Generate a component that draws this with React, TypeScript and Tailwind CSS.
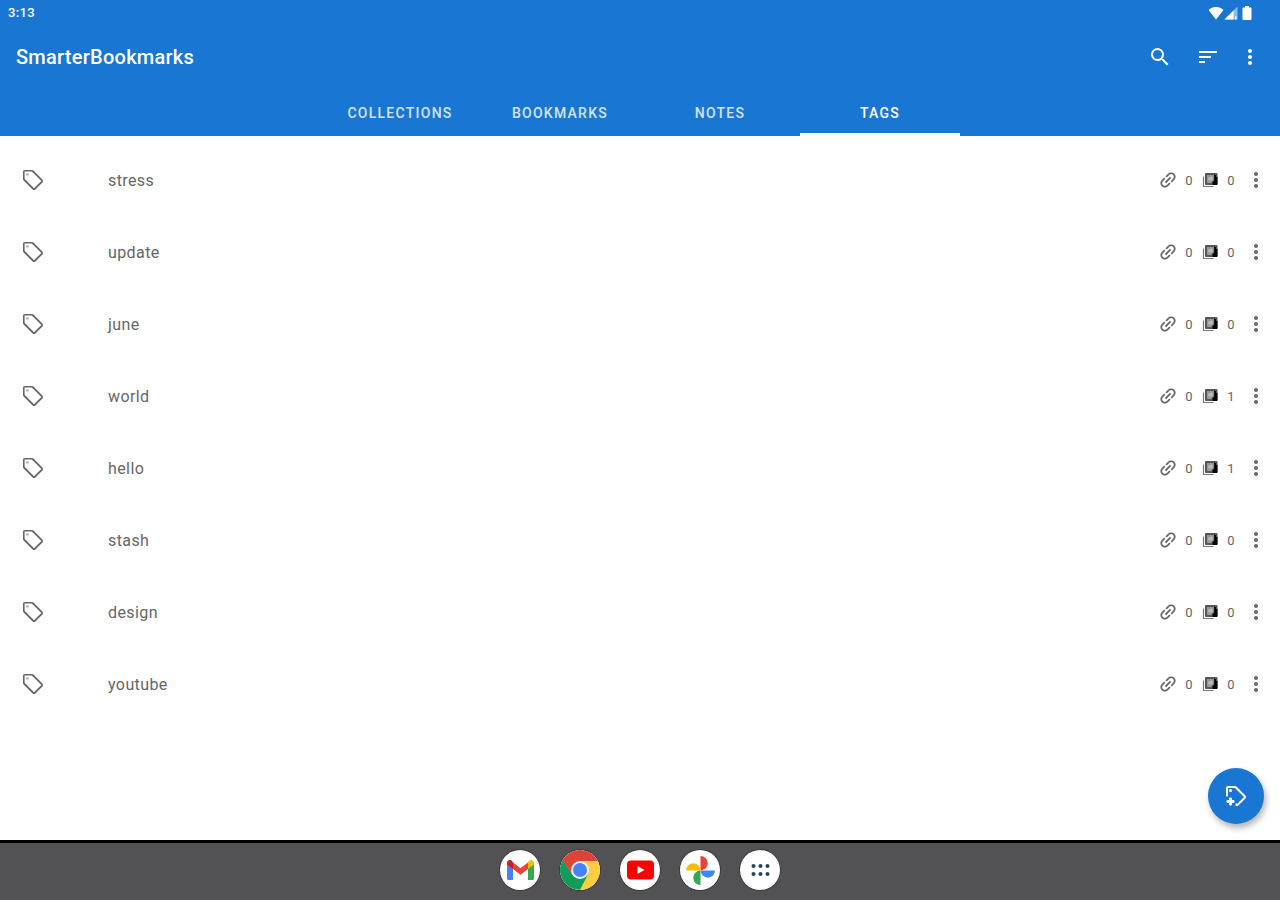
import * as React from 'react';
import { MdMoreVert, MdSearch, MdSort } from 'react-icons/md';
import { cva, type VariantProps } from 'class-variance-authority';

interface Tag {
  name: string;
  bookmarks: number;
  notes: number;
}

const tags: Tag[] = [
  { name: 'stress', bookmarks: 0, notes: 0 },
  { name: 'update', bookmarks: 0, notes: 0 },
  { name: 'june', bookmarks: 0, notes: 0 },
  { name: 'world', bookmarks: 0, notes: 1 },
  { name: 'hello', bookmarks: 0, notes: 1 },
  { name: 'stash', bookmarks: 0, notes: 0 },
  { name: 'design', bookmarks: 0, notes: 0 },
  { name: 'youtube', bookmarks: 0, notes: 0 },
];

const tabs = ['Collections', 'Bookmarks', 'Notes', 'Tags'];

/* ---------- Icons ---------- */

type IconProps = React.SVGProps<SVGSVGElement>;

const TagIcon = (props: IconProps) => (
  <svg viewBox="0 0 24 24" fill="currentColor" aria-hidden="true" {...props}>
    <path d="M21.41 11.58l-9-9A2 2 0 0 0 11 2H4a2 2 0 0 0-2 2v7a2 2 0 0 0 .59 1.42l9 9A2 2 0 0 0 13 22a2 2 0 0 0 1.41-.59l7-7A2 2 0 0 0 22 13a2 2 0 0 0-.59-1.42M13 20.2L3.6 10.8V3.6h7.2l9.6 9.4z" />
    <circle cx="6.4" cy="6.4" r="1.2" opacity=".6" />
  </svg>
);

const TagPlusIcon = (props: IconProps) => (
  <svg viewBox="0 0 24 24" fill="currentColor" aria-hidden="true" {...props}>
    <path d="M21.41 11.58l-9-9A2 2 0 0 0 11 2H4a2 2 0 0 0-2 2v7a2 2 0 0 0 .59 1.42l.41.4A5.6 5.6 0 0 1 4 12.2V4h7l9 9-7 7-.9-.9a5.8 5.8 0 0 1-.9 1.9l.39.41A2 2 0 0 0 13 22a2 2 0 0 0 1.41-.59l7-7A2 2 0 0 0 22 13a2 2 0 0 0-.59-1.42z" />
    <circle cx="6.5" cy="6.5" r="1.5" />
    <path
      d="M10 18.5H7.5V21h-2v-2.5H3v-2h2.5V14h2v2.5H10z"
      stroke="currentColor"
    />
  </svg>
);

const LinkIcon = (props: IconProps) => (
  <svg viewBox="3 3 18 18" fill="currentColor" aria-hidden="true" {...props}>
    <path
      transform="rotate(-45 12 12)"
      d="M3.9 12c0-1.710 1.390-3.100 3.100-3.100h4V7H7c-2.760 0-5 2.240-5 5s2.240 5 5 5h4v-1.900H7c-1.710 0-3.100-1.390-3.100-3.100zM8 13h8v-2H8v2zm9-6h-4v1.900h4c1.710 0 3.100 1.390 3.100 3.100s-1.390 3.100-3.100 3.100h-4V17h4c2.760 0 5-2.240 5-5s-2.240-5-5-5z"
    />
  </svg>
);

const NotesIcon = (props: IconProps) => (
  <svg viewBox="0 0 16 16" aria-hidden="true" {...props}>
    <path d="M1.5 4.5v10h10" fill="none" stroke="#777" strokeWidth="1.2" />
    <rect x="3" y="1" width="12.5" height="12" rx="1" fill="#555" />
    <path d="M5 3h7v4.500L9.500 11H5z" fill="#999" />
    <path d="M6.500 5h4v3.500h-4z" fill="#bbb" />
    <path d="M12 3h2v2h1.500v7a1 1 0 0 1-1 1h-4V9.500H12z" fill="#080808" />
  </svg>
);

const WifiIcon = (props: IconProps) => (
  <svg viewBox="0 0 16 14" fill="currentColor" aria-hidden="true" {...props}>
    <path d="M8 13.5L.5 4C2.500 2 5 1 8 1s5.500 1 7.500 3z" />
  </svg>
);

const SignalIcon = (props: IconProps) => (
  <svg viewBox="0 0 14 14" fill="currentColor" aria-hidden="true" {...props}>
    <path d="M13.500.5v13H.5z" opacity=".5" />
    <path d="M9.500 4.500v9H.5zM11 10.500h1.500V13.500H11z" />
  </svg>
);

const BatteryIcon = (props: IconProps) => (
  <svg viewBox="0 0 10 14" fill="currentColor" aria-hidden="true" {...props}>
    <path d="M3 0h4v1.500h1.500c.6 0 1 .4 1 1V13c0 .6-.4 1-1 1h-7c-.6 0-1-.4-1-1V2.500c0-.6.4-1 1-1H3z" />
  </svg>
);

const GmailIcon = () => (
  <svg viewBox="0 0 40 40" className="size-10" aria-hidden="true">
    <path d="M7 14v14.500c0 .8.700 1.500 1.500 1.500H13V18z" fill="#4285f4" />
    <path d="M28 18v12h4.500c.8 0 1.500-.700 1.500-1.500V14z" fill="#34a853" />
    <path d="M28 12.500V19l6-4.500V13c0-2.500-2.800-3.800-4.700-2.400z" fill="#fbbc04" />
    <path d="M13 19v-6.500l7.500 5.700 7.500-5.700V19l-7.500 5.700z" fill="#ea4335" />
    <path d="M7 13v1.500l6 4.500v-6.500l-1.300-1.900C9.800 9.200 7 10.500 7 13z" fill="#c5221f" />
  </svg>
);

const ChromeIcon = () => (
  <svg viewBox="0 0 40 40" className="size-10" aria-hidden="true">
    <path d="M20 11h17.900A20 20 0 0 1 20 40l8-15.500z" fill="#ffcd40" />
    <path d="M12.200 24.500L3 9.500A20 20 0 0 0 20 40l8-15.500z" fill="#0f9d58" />
    <path d="M2.700 10A20 20 0 0 1 37.900 11H20l-7.800 13.500z" fill="#db4437" />
    <circle cx="20" cy="20" r="9" fill="#f1f1f1" />
    <circle cx="20" cy="20" r="7" fill="#4285f4" />
  </svg>
);

const YouTubeIcon = () => (
  <svg viewBox="0 0 40 40" className="size-10" aria-hidden="true">
    <rect x="7" y="10.500" width="27" height="19" rx="4" fill="#f00" />
    <path d="M17.500 16v8l7-4z" fill="#fff" />
  </svg>
);

const PhotosIcon = () => (
  <svg viewBox="0 0 40 40" className="size-10" aria-hidden="true">
    <path d="M20.500 6a7.200 7.200 0 0 1 0 14.400z" fill="#ea4335" />
    <path d="M35 20.500a7.200 7.200 0 0 1-14.400 0z" fill="#4285f4" />
    <path d="M20.500 35a7.200 7.200 0 0 1 0-14.400z" fill="#34a853" />
    <path d="M6 20.500a7.200 7.200 0 0 1 14.400 0z" fill="#fbbc04" />
  </svg>
);

const AppsIcon = () => (
  <svg viewBox="0 0 40 40" className="size-10" aria-hidden="true">
    {[13.5, 20.5, 27.5].map((x) => (
      <g key={x} fill="#25465a">
        <circle cx={x} cy="16" r="2" />
        <circle cx={x} cy="24" r="2" />
      </g>
    ))}
  </svg>
);

/* ---------- Components ---------- */

const iconButtonVariants = cva('flex items-center justify-center', {
  variants: {
    size: {
      default: 'h-12 w-12',
      narrow: 'h-12 w-9',
      small: 'h-12 w-6',
    },
  },
  defaultVariants: { size: 'default' },
});

interface IconButtonProps
  extends
    React.ButtonHTMLAttributes<HTMLButtonElement>,
    VariantProps<typeof iconButtonVariants> {}

const IconButton = ({ size, ...props }: IconButtonProps) => (
  <button type="button" className={iconButtonVariants({ size })} {...props} />
);

const StatusBar = () => (
  <div className="flex h-[26px] items-center justify-between pr-7 pl-2">
    <span className="text-[13px] font-medium tracking-wide">3:13</span>
    <div className="flex items-center">
      <WifiIcon className="h-3.5 w-4" />
      <SignalIcon className="size-3.5" />
      <BatteryIcon className="ml-1 h-3.5 w-2.5" />
    </div>
  </div>
);

const AppBar = () => (
  <div className="flex h-[62px] items-center justify-between pr-3 pl-4">
    <h1 className="text-xl font-medium tracking-[0.0125em]">
      SmarterBookmarks
    </h1>
    <div className="flex">
      <IconButton aria-label="Search">
        <MdSearch className="size-6" />
      </IconButton>
      <IconButton aria-label="Sort">
        <MdSort className="size-6" />
      </IconButton>
      <IconButton size="narrow" aria-label="More options">
        <MdMoreVert className="size-6" />
      </IconButton>
    </div>
  </div>
);

interface TabBarProps {
  active: string;
  onChange: (tab: string) => void;
}

const TabBar = ({ active, onChange }: TabBarProps) => (
  <div role="tablist" className="flex h-12 justify-center">
    {tabs.map((tab) => (
      <button
        key={tab}
        type="button"
        role="tab"
        aria-selected={tab === active}
        onClick={() => onChange(tab)}
        className="w-40 border-b-3 border-transparent pt-1 text-sm font-medium tracking-[0.09em] text-white/80 uppercase aria-selected:border-white aria-selected:text-white"
      >
        {tab}
      </button>
    ))}
  </div>
);

const TagRow = ({ tag }: { tag: Tag }) => (
  <li className="flex h-18 items-center pr-3 pl-[21px] text-[#666]">
    <TagIcon className="size-6 shrink-0" />
    <span className="ml-[63px] flex-1 pt-px tracking-wide">{tag.name}</span>
    <div className="flex items-center gap-2 text-center text-[13px]">
      <LinkIcon className="size-4" />
      <span className="w-2.5 pt-px">{tag.bookmarks}</span>
      <NotesIcon className="size-4" />
      <span className="w-2.5 pt-px">{tag.notes}</span>
      <IconButton size="small" aria-label={`Options for ${tag.name}`}>
        <MdMoreVert className="size-6" />
      </IconButton>
    </div>
  </li>
);

const dockApps = [
  { label: 'Gmail', icon: <GmailIcon /> },
  { label: 'Chrome', icon: <ChromeIcon /> },
  { label: 'YouTube', icon: <YouTubeIcon /> },
  { label: 'Photos', icon: <PhotosIcon /> },
  { label: 'All apps', icon: <AppsIcon /> },
];

const Dock = () => (
  <nav
    aria-label="Dock"
    className="flex h-15 items-center justify-center gap-5 border-t-3 border-black bg-[#525254] pb-[3px]"
  >
    {dockApps.map((app) => (
      <button
        key={app.label}
        type="button"
        aria-label={app.label}
        className="size-10 overflow-hidden rounded-full bg-white ring-1 ring-black/30"
      >
        {app.icon}
      </button>
    ))}
  </nav>
);

export default function App() {
  const [active, setActive] = React.useState('Tags');

  return (
    <div className="flex min-h-screen flex-col bg-white font-[Roboto,sans-serif]">
      <header className="bg-[#1976d2] text-white">
        <StatusBar />
        <AppBar />
        <TabBar active={active} onChange={setActive} />
      </header>

      <main className="relative flex-1 py-2">
        <ul>
          {tags.map((tag) => (
            <TagRow key={tag.name} tag={tag} />
          ))}
        </ul>
        <button
          type="button"
          aria-label="Add tag"
          className="absolute right-4 bottom-4 flex size-14 items-center justify-center rounded-full bg-[#1976d2] text-white shadow-[2px_4px_6px_rgba(0,0,0,0.3)]"
        >
          <TagPlusIcon className="size-6" />
        </button>
      </main>

      <Dock />
    </div>
  );
}
